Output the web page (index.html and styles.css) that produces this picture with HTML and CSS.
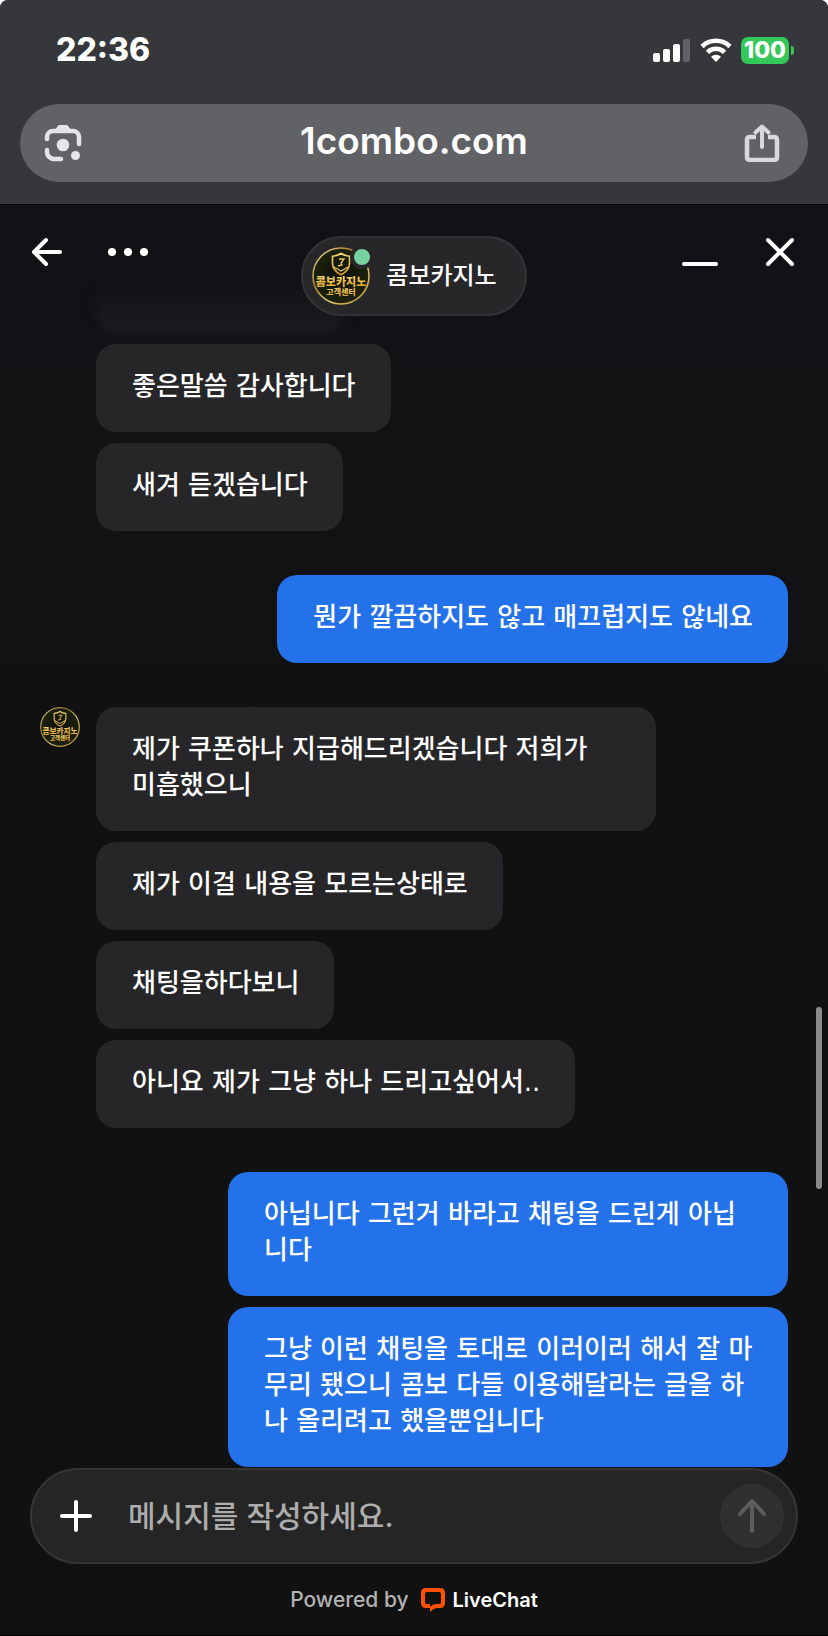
FILE: index.html
```html
<!DOCTYPE html>
<html lang="ko">
<head>
<meta charset="utf-8">
<meta name="viewport" content="width=device-width, initial-scale=1">
<title>콤보카지노</title>
<link rel="stylesheet" href="styles.css">
</head>
<body>
<svg class="defs" aria-hidden="true">
  <defs>
    <linearGradient id="gold" x1="0" y1="0" x2="0" y2="1">
      <stop offset="0" stop-color="#f7dc72"/>
      <stop offset="1" stop-color="#d9a02c"/>
    </linearGradient>
    <linearGradient id="ring" x1="0" y1="0" x2="1" y2="1">
      <stop offset="0" stop-color="#f3e3a8"/>
      <stop offset=".35" stop-color="#a87f2c"/>
      <stop offset=".6" stop-color="#e8cc70"/>
      <stop offset="1" stop-color="#b98d2f"/>
    </linearGradient>
    <radialGradient id="dark">
      <stop offset="0" stop-color="#0c0d06"/>
      <stop offset="1" stop-color="#1d230f"/>
    </radialGradient>
    <symbol id="brand" viewBox="0 0 58 58">
      <circle cx="29" cy="29" r="28" fill="url(#dark)" stroke="url(#ring)" stroke-width="1.6"/>
      <path d="M29 6.500c3 2 5.500 2.600 8.500 2.800v7c0 5.500-3.500 9-8.500 11.500-5-2.500-8.500-6-8.500-11.500v-7c3-.2 5.500-.8 8.500-2.800z" fill="none" stroke="url(#gold)" stroke-width="1.600"/>
      <path d="M27 12h5l-3 4 1 2-4 1M22 20l7 4 7-4" fill="none" stroke="#e9c95c" stroke-width="1.300"/>
      <text class="brand-name" x="29" y="39" text-anchor="middle">콤보카지노</text>
      <text class="brand-sub" x="29" y="48" text-anchor="middle">고객센터</text>
    </symbol>
  </defs>
</svg>

<div class="browser">
  <div class="status">
    <time class="clock">22:36</time>
    <div class="indicators">
      <svg width="38" height="24" viewBox="0 0 38 24" fill="#fff" aria-label="신호">
        <rect x="0" y="15" width="7" height="9" rx="2"/>
        <rect x="10" y="11" width="7" height="13" rx="2"/>
        <rect x="20" y="6" width="7" height="18" rx="2"/>
        <rect x="30" y="1" width="7" height="23" rx="2" fill="#616265"/>
      </svg>
      <svg width="32" height="24" viewBox="0 0 32 24" aria-label="Wi-Fi">
        <path d="M2 8.500a20 20 0 0 1 28 0M7.500 14.300a12 12 0 0 1 17 0" fill="none" stroke="#fff" stroke-width="4.600"/>
        <path d="M16 24l-5-5.200a7.200 7.200 0 0 1 10 0z" fill="#fff"/>
      </svg>
      <div class="battery"><span class="charge">100</span><span class="nub"></span></div>
    </div>
  </div>
  <div class="address">
    <button class="plain" type="button" aria-label="이미지 검색">
      <svg width="38" height="38" viewBox="0 0 38 38" fill="none" stroke="#e4e5ea" stroke-width="4.500" stroke-linecap="round">
        <path d="M3 15v-2a6 6 0 0 1 6-6h20a6 6 0 0 1 6 6v7M3 26v2a7 7 0 0 0 7 7h7"/>
        <path d="M11 6l2.500-3.500q.6-1.500 2-1.500h7q1.400 0 2 1.500l2.500 3.500z" fill="#e4e5ea" stroke="none"/>
        <circle cx="19" cy="21" r="6.300" fill="#e4e5ea" stroke="none"/>
        <circle cx="31.500" cy="31.500" r="4.500" fill="#e4e5ea" stroke="none"/>
      </svg>
    </button>
    <a class="url" href="#">1combo.com</a>
    <button class="plain" type="button" aria-label="공유">
      <svg width="36" height="38" viewBox="0 0 36 38" fill="none" stroke="#d8d9dd" stroke-width="4.500" stroke-linecap="round" stroke-linejoin="round">
        <path d="M12 13H6q-3 0-3 3v17q0 3 3 3h24q3 0 3-3V16q0-3-3-3h-6" stroke-linecap="butt"/>
        <path d="M18 23V3M11.500 8.500L18 2.500l6.500 6" stroke-width="4"/>
      </svg>
    </button>
  </div>
</div>

<main class="chat">
  <header class="chat-head">
    <div class="tools">
      <button class="plain" type="button" aria-label="뒤로">
        <svg width="32" height="32" viewBox="0 0 32 32" fill="none" stroke="#fff" stroke-width="4" stroke-linecap="round" stroke-linejoin="round"><path d="M28 16H2M14 4L2 16l12 12"/></svg>
      </button>
      <button class="plain" type="button" aria-label="더보기">
        <svg width="40" height="32" viewBox="0 0 40 32" fill="#fff"><circle cx="4" cy="16" r="4"/><circle cx="20" cy="16" r="4"/><circle cx="36" cy="16" r="4"/></svg>
      </button>
    </div>
    <div class="agent">
      <span class="portrait">
        <svg width="58" height="58" aria-hidden="true"><use href="#brand"/></svg>
        <span class="online"></span>
      </span>
      <span class="agent-name">콤보카지노</span>
    </div>
    <div class="tools tools-end">
      <button class="plain" type="button" aria-label="최소화">
        <svg width="36" height="32" viewBox="0 0 36 32"><rect y="26" width="36" height="4" rx="2" fill="#fff"/></svg>
      </button>
      <button class="plain" type="button" aria-label="닫기">
        <svg width="32" height="32" viewBox="0 0 32 32" stroke="#fff" stroke-width="4" stroke-linecap="round"><path d="M4 4l24 24M28 4L4 28"/></svg>
      </button>
    </div>
  </header>

  <div class="messages">
    <section class="group">
      <div class="bubble faded"></div>
      <p class="bubble">좋은말씀 감사합니다</p>
      <p class="bubble">새겨 듣겠습니다</p>
    </section>
    <section class="group mine">
      <p class="bubble">뭔가 깔끔하지도 않고 매끄럽지도 않네요</p>
    </section>
    <section class="group">
      <svg class="avatar" width="40" height="40" aria-hidden="true"><use href="#brand"/></svg>
      <p class="bubble wide">제가 쿠폰하나 지급해드리겠습니다 저희가<br>미흡했으니</p>
      <p class="bubble">제가 이걸 내용을 모르는상태로</p>
      <p class="bubble">채팅을하다보니</p>
      <p class="bubble">아니요 제가 그냥 하나 드리고싶어서..</p>
    </section>
    <section class="group mine">
      <p class="bubble">아닙니다 그런거 바라고 채팅을 드린게 아닙니다</p>
      <p class="bubble">그냥 이런 채팅을 토대로 이러이러 해서 잘 마무리 됐으니 콤보 다들 이용해달라는 글을 하나 올리려고 했을뿐입니다</p>
    </section>
  </div>
  <span class="scroll-thumb"></span>

  <form class="composer">
    <button class="plain" type="button" aria-label="첨부">
      <svg width="32" height="32" viewBox="0 0 32 32" stroke="#fff" stroke-width="4" stroke-linecap="round"><path d="M16 2v28M2 16h28"/></svg>
    </button>
    <input class="entry" type="text" placeholder="메시지를 작성하세요." aria-label="메시지">
    <button class="send" type="button" aria-label="보내기">
      <svg width="32" height="36" viewBox="0 0 32 36" fill="none" stroke="#5c5c5c" stroke-width="4" stroke-linecap="round" stroke-linejoin="round"><path d="M16 33V3M4 16L16 3l12 13"/></svg>
    </button>
  </form>

  <footer class="powered">
    <span>Powered by</span>
    <a class="livechat" href="#">
      <svg width="24" height="24" viewBox="0 0 24 24"><path fill="#ff5100" fill-rule="evenodd" d="M5 0h14q5 0 5 5v10q0 5-5 5h-3.500Q12 20.500 9 24v-4H5q-5 0-5-5V5q0-5 5-5zM6 4q-2 0-2 2v8q0 2 2 2h3v2.500Q12 16 15 16h3q2 0 2-2V6q0-2-2-2z"/></svg>
      LiveChat
    </a>
  </footer>
</main>
</body>
</html>
```
FILE: styles.css
```css
* { box-sizing: border-box; }

html { background: #fff; }

body {
  margin: 0;
  min-height: 100vh;
  display: flex;
  flex-direction: column;
  background: #121113;
  border-radius: 8px 8px 0 0;
  overflow-x: hidden;
  color: #fff;
  font-family: Inter, "Noto Sans CJK KR", sans-serif;
  font-size: 26px;
  line-height: 36px;
}

.defs { position: absolute; width: 0; height: 0; }
.brand-name { font: 900 11px "Noto Sans CJK KR", sans-serif; fill: url(#gold); }
.brand-sub { font: 900 8px "Noto Sans CJK KR", sans-serif; fill: url(#gold); }

.plain {
  display: flex;
  padding: 0;
  border: 0;
  background: none;
  cursor: pointer;
}

/* Browser chrome */
.browser {
  padding: 0 20px 22px;
  background: #36373a;
  border-bottom: 1px solid #000;
  border-radius: 8px 8px 0 0;
}

.status {
  display: flex;
  align-items: center;
  justify-content: space-between;
  height: 104px;
  padding: 0 14px 4px 36px;
}

.clock { font-size: 32px; font-weight: 800; }
.indicators { display: flex; align-items: center; gap: 9px; }
.battery { display: flex; align-items: center; gap: 2px; }

.charge {
  width: 48px;
  border-radius: 7px;
  background: #34c759;
  font-size: 23px;
  font-weight: 800;
  line-height: 27px;
  text-align: center;
}

.nub { width: 3px; height: 9px; border-radius: 0 4px 4px 0; background: #34c759; }

.address {
  display: flex;
  align-items: center;
  justify-content: space-between;
  height: 78px;
  padding: 0 28px 0 24px;
  border-radius: 39px;
  background: #616265;
}

.url {
  padding: 0 0 4px 2px;
  color: #fff;
  font-size: 37px;
  font-weight: 600;
  text-decoration: none;
}

/* Chat window */
.chat {
  position: relative;
  flex: 1;
  display: flex;
  flex-direction: column;
  background: linear-gradient(#131115, #111111 50%);
  border-bottom: 1px solid #000;
}

.chat-head {
  position: absolute;
  z-index: 1;
  inset: 0 0 auto;
  display: grid;
  grid-template-columns: 1fr auto 1fr;
  padding: 31px 32px 0;
}

.tools { display: flex; gap: 44px; }
.tools-end { justify-content: flex-end; gap: 46px; }

.agent {
  display: flex;
  align-items: center;
  gap: 16px;
  height: 80px;
  padding: 0 28px 0 9px;
  border: 2px solid #343336;
  border-radius: 40px;
  background: #272629;
}

.portrait { position: relative; display: flex; }

.online {
  position: absolute;
  top: -2px;
  right: -4px;
  width: 24px;
  height: 24px;
  border: 4px solid #272629;
  border-radius: 50%;
  background: #77d1a0;
}

.agent-name { font-size: 24px; font-weight: 500; }

.messages {
  flex: 1;
  display: flex;
  flex-direction: column;
  gap: 44px;
  padding: 65px 40px 1px 96px;
}

.group {
  position: relative;
  display: flex;
  flex-direction: column;
  align-items: flex-start;
  gap: 11px;
}

.bubble {
  max-width: 560px;
  margin: 0;
  padding: 24px 35px 28px 36px;
  border-radius: 20px;
  background: #262528;
  font-family: "DejaVu Sans", "Noto Sans CJK KR", sans-serif;
  font-weight: 500;
}

.wide { width: 560px; }

.faded {
  width: 249px;
  height: 63px;
  background: linear-gradient(transparent 20%, #1e1c1f);
  filter: blur(5px);
}

.mine { align-items: flex-end; }
.mine .bubble { background: #2472e9; }

.avatar { position: absolute; top: 0; left: -56px; }

.scroll-thumb {
  position: absolute;
  top: 802px;
  right: 6px;
  width: 6px;
  height: 182px;
  border-radius: 3px;
  background: #8a8a8a;
}

.composer {
  display: flex;
  align-items: center;
  height: 96px;
  margin: 0 30px;
  padding: 0 12px 0 28px;
  border: 2px solid #363636;
  border-radius: 48px;
  background: #252525;
}

.entry {
  flex: 1;
  min-width: 0;
  margin: 0 36px;
  padding: 0;
  border: 0;
  outline: 0;
  background: none;
  color: #fff;
  font: 500 30px Inter, "Noto Sans CJK KR", sans-serif;
}

.entry::placeholder { color: #adadad; opacity: 1; }

.send {
  display: flex;
  align-items: center;
  justify-content: center;
  width: 64px;
  height: 64px;
  padding: 0;
  border: 0;
  border-radius: 50%;
  background: #303030;
}

.powered {
  display: flex;
  align-items: center;
  justify-content: center;
  gap: 12px;
  height: 71px;
  color: #b3b3b3;
  font-size: 21px;
  font-weight: 500;
}

.livechat {
  display: flex;
  align-items: center;
  gap: 8px;
  color: #fff;
  font-size: 20px;
  font-weight: 600;
  text-decoration: none;
}
```
